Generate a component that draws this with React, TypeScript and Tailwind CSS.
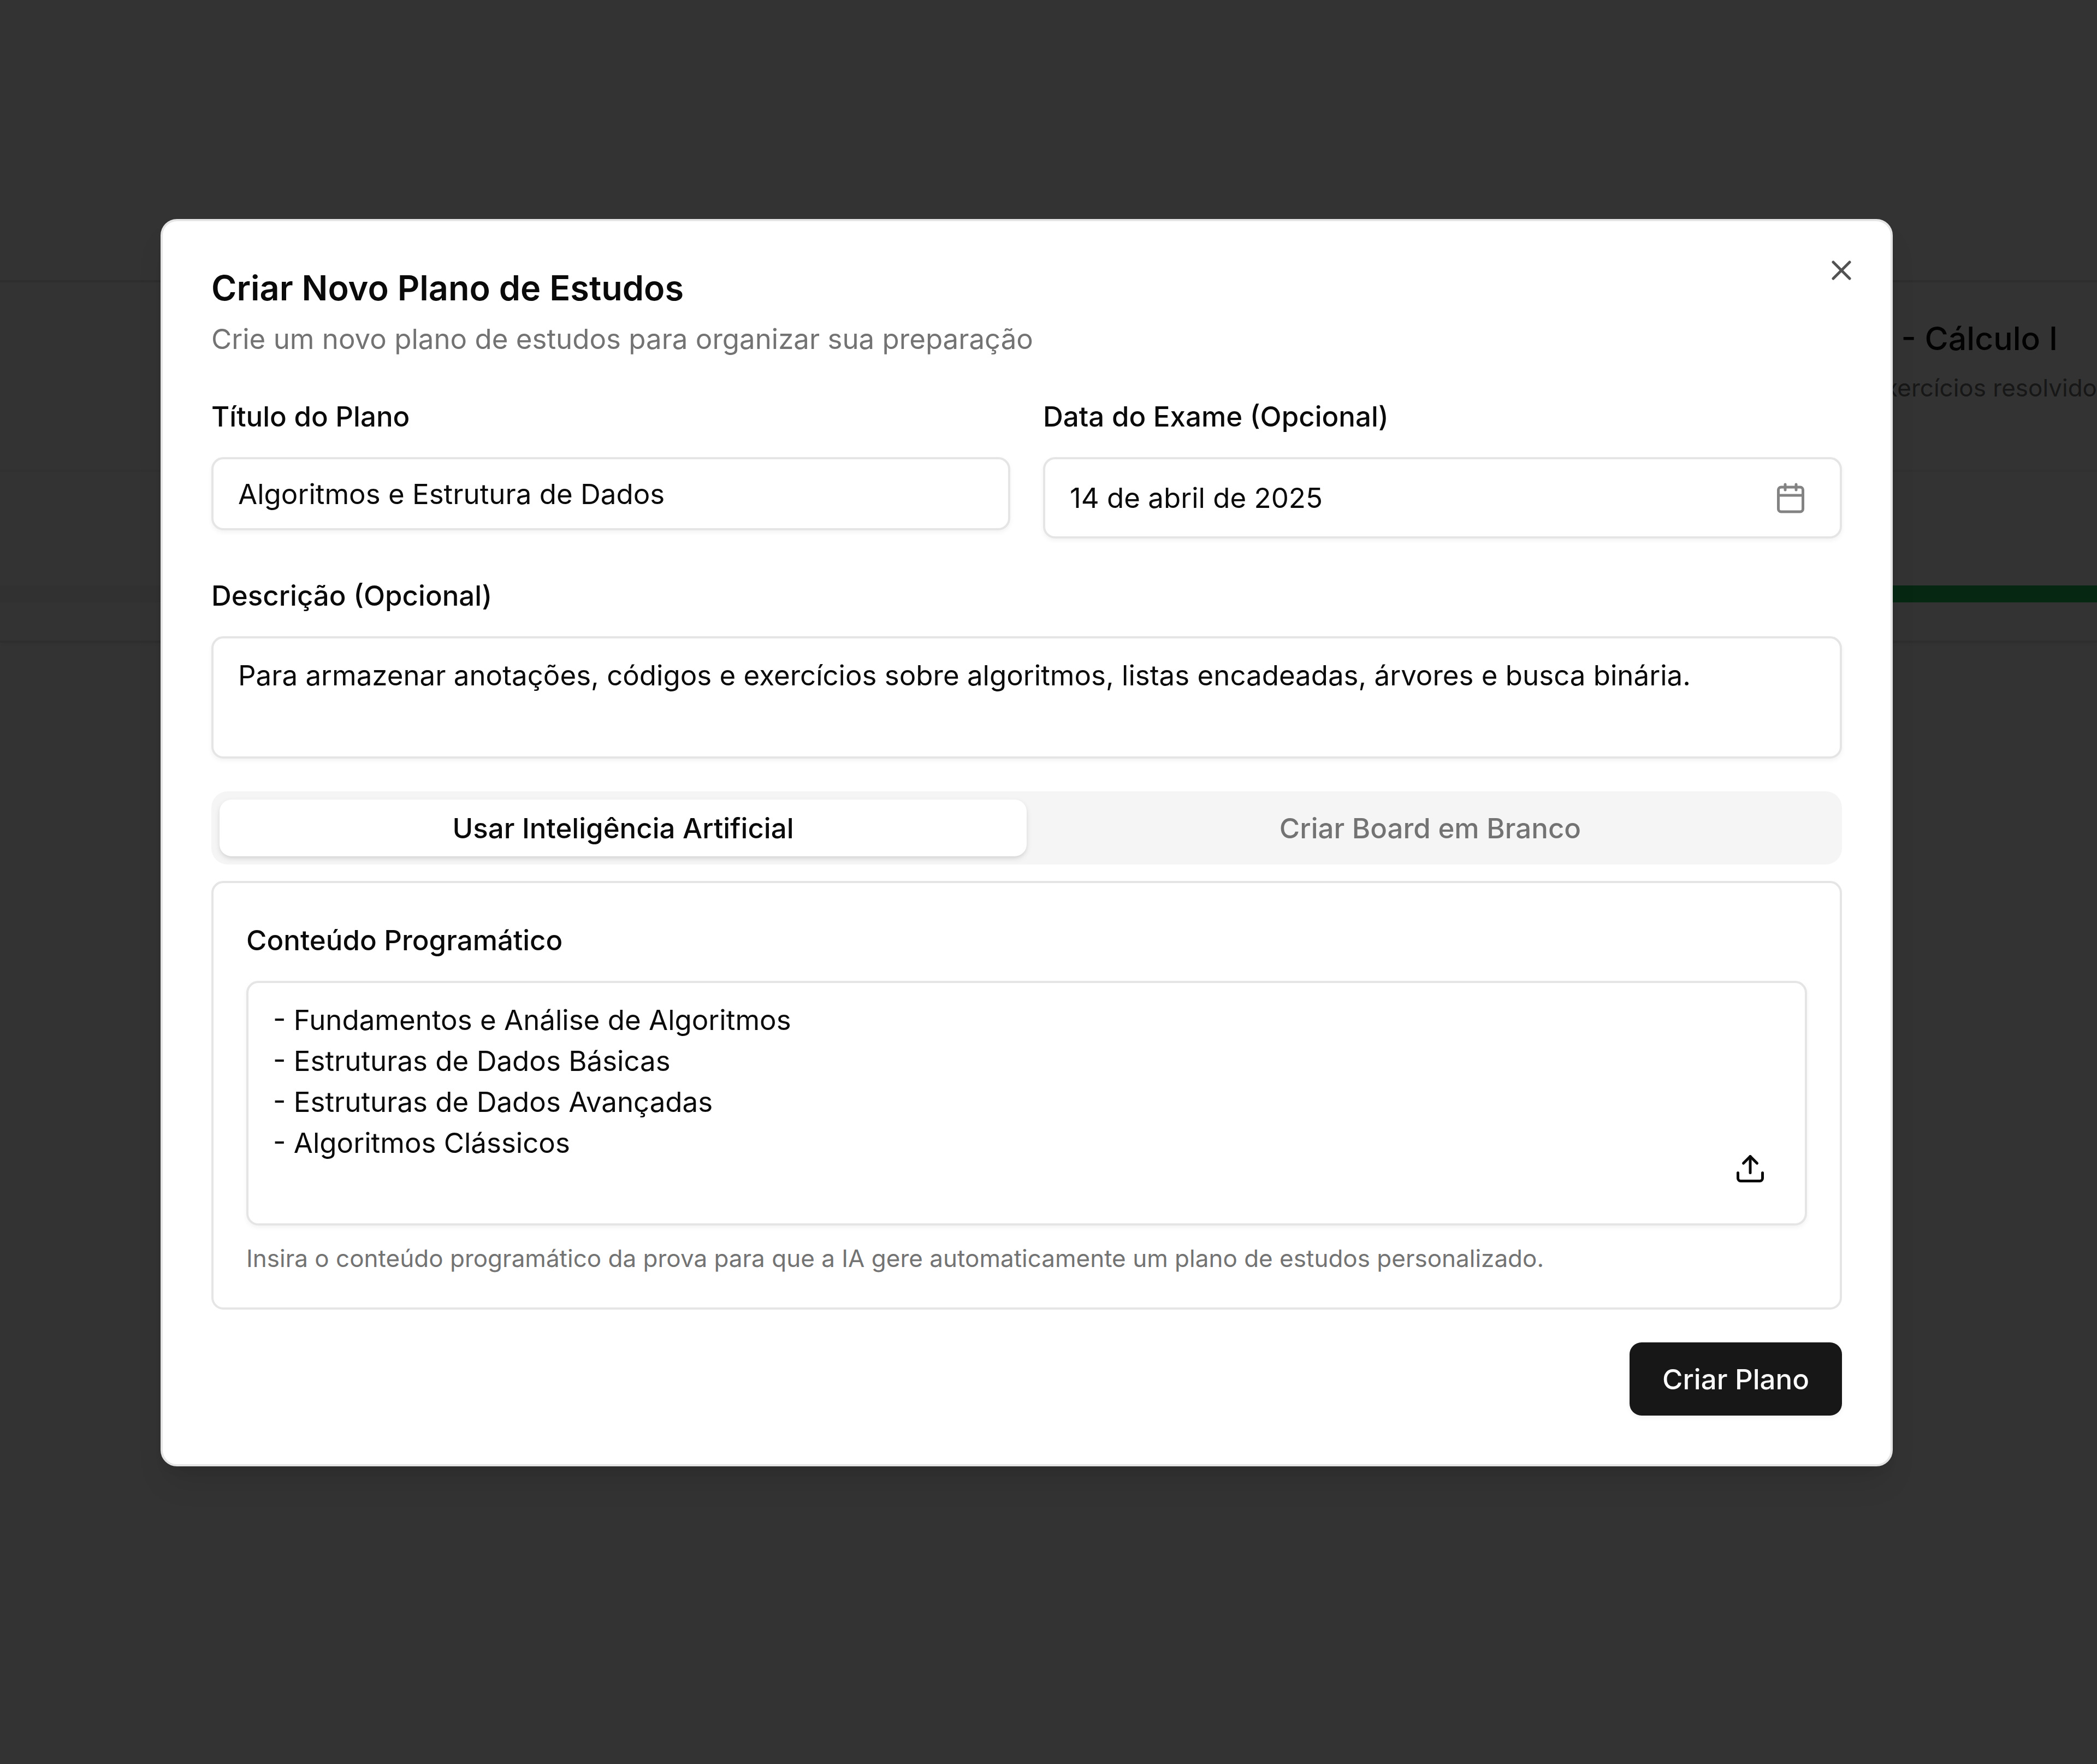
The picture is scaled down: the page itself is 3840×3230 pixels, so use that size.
import React, { useState } from 'react'
import { Calendar, Upload, X } from 'lucide-react'

const labelClass = "block text-[51px] leading-[89px] font-medium"
const fieldClass = "block w-full border-4 border-[#e5e5e5] rounded-[22px] bg-white px-[45px] text-[51px] leading-[75px] shadow-[0_4px_8px_rgba(0,0,0,0.05)]"
const activeTab = "bg-white text-[#0a0a0a] shadow-[0_4px_11px_rgba(0,0,0,0.1),0_4px_8px_-4px_rgba(0,0,0,0.1)]"

const topics = `- Fundamentos e Análise de Algoritmos
- Estruturas de Dados Básicas
- Estruturas de Dados Avançadas
- Algoritmos Clássicos`

const Boards = () => {
  return (
    <div className="grid grid-cols-2 pt-[513px]">
      <div className="border-y-4 border-[#e5e5e5] shadow-[0_4px_8px_rgba(0,0,0,0.05)]">
        <div className="h-[343px]" />
        <div className="border-t-4 border-[#f5f5f5] pt-[208px] pb-[70px]">
          <div className="h-[31px] bg-[#f5f5f5]" />
        </div>
      </div>
      <div className="border-y-4 border-[#e5e5e5] shadow-[0_4px_8px_rgba(0,0,0,0.05)]">
        <div className="h-[343px] flex justify-end pt-[58px]">
          <div className="whitespace-nowrap">
            <h2 className="pr-[72px] text-right text-[59px] leading-[90px] font-medium">- Cálculo I</h2>
            <p className="text-right text-[44px] leading-[90px] text-[#737373]">exercícios resolvido</p>
          </div>
        </div>
        <div className="border-t-4 border-[#f5f5f5] pt-[208px] pb-[70px]">
          <div className="h-[31px] bg-[#22c55e]" />
        </div>
      </div>
    </div>
  )
}

const App = () => {
  const [tab, setTab] = useState("ia")

  return (
    <main className="relative min-h-screen overflow-hidden bg-white text-[#0a0a0a] font-['Inter','Liberation_Sans',sans-serif]">
      <Boards />
      <div className="absolute inset-0 bg-black/80 pt-[401px] pl-[294px] pr-[374px]">
        <div
          role="dialog"
          aria-labelledby="dialog-title"
          className="relative border-4 border-[#e5e5e5] rounded-[30px] bg-white p-[89px] shadow-[0_37px_56px_-11px_rgba(0,0,0,0.1),0_15px_22px_-15px_rgba(0,0,0,0.1)]"
        >
          <button aria-label="Fechar" className="absolute top-[60px] right-[60px] opacity-70">
            <X size={60} />
          </button>

          <h1 id="dialog-title" className="text-[63px] leading-[67px] font-semibold">Criar Novo Plano de Estudos</h1>
          <p className="mt-[22px] text-[51px] leading-[75px] text-[#737373]">
            Crie um novo plano de estudos para organizar sua preparação
          </p>

          <form className="mt-[60px] flex flex-col gap-[60px]" onSubmit={(e) => e.preventDefault()}>
            <div className="grid grid-cols-2 items-start gap-[60px]">
              <div className="flex flex-col gap-[30px]">
                <label htmlFor="titulo" className={labelClass}>Título do Plano</label>
                <input id="titulo" type="text" defaultValue="Algoritmos e Estrutura de Dados" className={`${fieldClass} h-[134px]`} />
              </div>
              <div className="flex flex-col gap-[30px]">
                <label htmlFor="data" className={labelClass}>Data do Exame (Opcional)</label>
                <button id="data" type="button" className={`${fieldClass} h-[149px]`}>
                  <span className="flex items-center justify-between pr-[15px]">
                    14 de abril de 2025
                    <Calendar size={60} className="opacity-50" />
                  </span>
                </button>
              </div>
            </div>

            <div className="flex flex-col gap-[30px]">
              <label htmlFor="descricao" className={labelClass}>Descrição (Opcional)</label>
              <textarea
                id="descricao"
                className={`${fieldClass} h-[224px] py-[30px] resize-none`}
                defaultValue="Para armazenar anotações, códigos e exercícios sobre algoritmos, listas encadeadas, árvores e busca binária."
              />
            </div>

            <div className="flex flex-col gap-[30px]">
              <div role="tablist" className="grid grid-cols-2 h-[134px] rounded-[30px] bg-[#f5f5f5] p-[15px] text-[51px] leading-[75px] font-medium">
                <button
                  type="button"
                  role="tab"
                  aria-selected={tab === "ia"}
                  onClick={() => setTab("ia")}
                  className={`rounded-[22px] ${tab === "ia" ? activeTab : "text-[#737373]"}`}
                >
                  Usar Inteligência Artificial
                </button>
                <button
                  type="button"
                  role="tab"
                  aria-selected={tab === "branco"}
                  onClick={() => setTab("branco")}
                  className={`rounded-[22px] ${tab === "branco" ? activeTab : "text-[#737373]"}`}
                >
                  Criar Board em Branco
                </button>
              </div>

              {tab === "ia" && (
                <div className="border-4 border-[#e5e5e5] rounded-[22px] p-[60px] flex flex-col gap-[30px]">
                  <label htmlFor="conteudo" className={labelClass}>Conteúdo Programático</label>
                  <div className="relative">
                    <textarea id="conteudo" className={`${fieldClass} h-[448px] py-[30px] resize-none`} defaultValue={topics} />
                    <button type="button" aria-label="Enviar arquivo" className="absolute right-[30px] bottom-[30px] size-[149px] flex items-center justify-center">
                      <Upload size={60} />
                    </button>
                  </div>
                  <p className="text-[44px] leading-[60px] text-[#737373]">
                    Insira o conteúdo programático da prova para que a IA gere automaticamente um plano de estudos personalizado.
                  </p>
                </div>
              )}
            </div>

            <button
              type="submit"
              className="self-end h-[134px] rounded-[22px] bg-[#171717] px-[60px] text-[51px] leading-[75px] font-medium text-[#fafafa] shadow-[0_4px_8px_rgba(0,0,0,0.05)]"
            >
              Criar Plano
            </button>
          </form>
        </div>
      </div>
    </main>
  )
}

export default App
